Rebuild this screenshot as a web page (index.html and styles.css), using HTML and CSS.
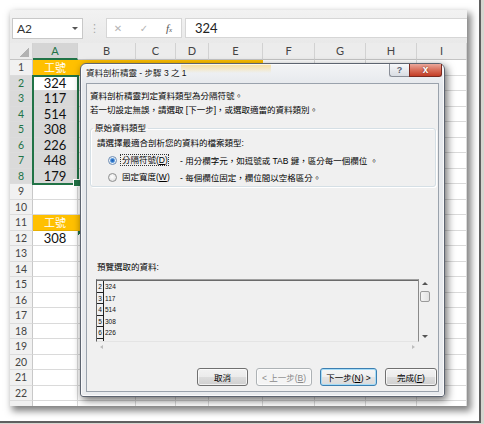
FILE: index.html
```html
<!DOCTYPE html>
<html>
<head>
<meta charset="utf-8">
<title>資料剖析精靈</title>
<link rel="stylesheet" href="styles.css">
</head>
<body>
<div class="photo">
  <div class="shot">
    <div class="fbar">
      <div class="namebox"><span>A2</span><span class="dd"></span></div>
      <div class="grip">⋮</div>
      <div class="fxbox"><span class="ic">✕</span><span class="ic ok">✓</span><span class="fx">f<small>x</small></span></div>
      <div class="finput">324</div>
    </div>
    <div class="sheet">
      <div class="grid">
        <i class="ch corner"></i><i class="ch cs">A</i><i class="ch">B</i><i class="ch">C</i><i class="ch">D</i><i class="ch">E</i><i class="ch">F</i><i class="ch">G</i><i class="ch">H</i><i class="ch">I</i>
        <b>1</b><i class="or t">工號</i><i class="or"></i><i class="or"></i><i class="or"></i><i class="or"></i><i></i><i></i><i></i><i></i>
        <b class="s">2</b><i class="a">324</i><i></i><i></i><i></i><i></i><i></i><i></i><i></i><i></i>
        <b class="s">3</b><i class="a s">117</i><i></i><i></i><i></i><i></i><i></i><i></i><i></i><i></i>
        <b class="s">4</b><i class="a s">514</i><i></i><i></i><i></i><i></i><i></i><i></i><i></i><i></i>
        <b class="s">5</b><i class="a s">308</i><i></i><i></i><i></i><i></i><i></i><i></i><i></i><i></i>
        <b class="s">6</b><i class="a s">226</i><i></i><i></i><i></i><i></i><i></i><i></i><i></i><i></i>
        <b class="s">7</b><i class="a s">448</i><i></i><i></i><i></i><i></i><i></i><i></i><i></i><i></i>
        <b class="s">8</b><i class="a s">179</i><i></i><i></i><i></i><i></i><i></i><i></i><i></i><i></i>
        <b>9</b><i></i><i></i><i></i><i></i><i></i><i></i><i></i><i></i><i></i>
        <b>10</b><i></i><i></i><i></i><i></i><i></i><i></i><i></i><i></i><i></i>
        <b>11</b><i class="or t">工號</i><i class="or"></i><i></i><i></i><i></i><i></i><i></i><i></i><i></i>
        <b>12</b><i class="a">308</i><i class="tri"></i><i></i><i></i><i></i><i></i><i></i><i></i><i></i>
        <b>13</b><i></i><i></i><i></i><i></i><i></i><i></i><i></i><i></i><i></i>
        <b>14</b><i></i><i></i><i></i><i></i><i></i><i></i><i></i><i></i><i></i>
        <b>15</b><i></i><i></i><i></i><i></i><i></i><i></i><i></i><i></i><i></i>
        <b>16</b><i></i><i></i><i></i><i></i><i></i><i></i><i></i><i></i><i></i>
        <b>17</b><i></i><i></i><i></i><i></i><i></i><i></i><i></i><i></i><i></i>
        <b>18</b><i></i><i></i><i></i><i></i><i></i><i></i><i></i><i></i><i></i>
        <b>19</b><i></i><i></i><i></i><i></i><i></i><i></i><i></i><i></i><i></i>
        <b>20</b><i></i><i></i><i></i><i></i><i></i><i></i><i></i><i></i><i></i>
        <b>21</b><i></i><i></i><i></i><i></i><i></i><i></i><i></i><i></i><i></i>
        <b>22</b><i></i><i></i><i></i><i></i><i></i><i></i><i></i><i></i><i></i>
        <b></b><i></i><i></i><i></i><i></i><i></i><i></i><i></i><i></i><i></i>
      </div>
      <div class="selbox"></div>

      <div class="dlg">
        <div class="tbar">
          <span class="ttl">資料剖析精靈 - 步驟 3 之 1</span>
          <div class="tbtns"><span class="help">?</span><span class="close">x</span></div>
        </div>
        <div class="body">
          <p>資料剖析精靈判定資料類型為分隔符號。</p>
          <p>若一切設定無誤，請選取 [下一步]，或選取適當的資料類別。</p>
          <fieldset>
            <legend>原始資料類型</legend>
            <p class="q">請選擇最適合剖析您的資料的檔案類型:</p>
            <div class="opt first"><span class="rb on"></span><span class="lbl f">分隔符號(<u>D</u>)</span><span class="desc">- 用分欄字元，如逗號或 TAB 鍵，區分每一個欄位 。</span></div>
            <div class="opt"><span class="rb"></span><span class="lbl">固定寬度(<u>W</u>)</span><span class="desc">- 每個欄位固定，欄位間以空格區分。</span></div>
          </fieldset>
          <p class="pvl">預覽選取的資料:</p>
          <div class="pv">
            <div class="pvd">
              <div class="pr"><span class="n">2</span><span class="v">324</span></div>
              <div class="pr"><span class="n">3</span><span class="v">117</span></div>
              <div class="pr"><span class="n">4</span><span class="v">514</span></div>
              <div class="pr"><span class="n">5</span><span class="v">308</span></div>
              <div class="pr"><span class="n">6</span><span class="v">226</span></div>
              <div class="pr"><span class="n"></span><span class="v"></span></div>
            </div>
            <div class="vs"><span class="up"></span><span class="thumb"></span><span class="dn"></span></div>
            <div class="hsb"><span class="lt"></span><span class="rt"></span></div>
            <div class="cor"></div>
          </div>
          <div class="btns">
            <button class="b1">取消</button>
            <button class="b2 dis">&lt; 上一步(<u>B</u>)</button>
            <button class="b3 def">下一步(<u>N</u>) &gt;</button>
            <button class="b4">完成(<u>F</u>)</button>
          </div>
        </div>
      </div>
    </div>
  </div>
</div>
</body>
</html>
```

FILE: styles.css
```css
* { box-sizing: border-box; }
html, body { margin: 0; }
body {
  width: 484px; height: 424px; overflow: hidden;
  background: #d6d6d0;
  font-family: "Liberation Sans", "Noto Sans CJK TC", sans-serif;
}
.photo {
  width: 481px; height: 423px;
  background: #fff;
  border-right: 2px solid #5f5f5f;
  border-bottom: 2px solid #5f5f5f;
  padding: 10px 0 0 10px;
}
.shot {
  width: 457px; height: 396px;
  background: #fff;
  overflow: hidden;
  box-shadow: 3px 4px 7px 1px rgba(0,0,0,.5);
}

/* formula bar */
.fbar {
  height: 33px;
  background: linear-gradient(#f2f2f2, #e9e9e9);
  display: flex; align-items: flex-start;
  padding: 8px 0 0 2px;
}
.namebox {
  width: 71px; height: 21px;
  background: #fff; border: 1px solid #c8c8c8;
  display: flex; align-items: center; justify-content: space-between;
  padding: 0 4px 0 4px;
  font-family: Lato, "Liberation Sans", sans-serif; font-size: 12px; color: #333;
}
.dd { width: 0; height: 0; border-left: 3px solid transparent; border-right: 3px solid transparent; border-top: 3px solid #555; }
.grip { width: 23px; height: 21px; text-align: center; line-height: 21px; font-family: "DejaVu Sans", sans-serif; font-size: 11px; color: #a8a8a8; }
.fxbox {
  width: 76px; height: 20px; background: #fff; border: 1px solid #d6d6d6;
  display: flex; align-items: center;
}
.ic { width: 22px; text-align: center; font-family: "DejaVu Sans", sans-serif; font-size: 10px; color: #b4b4b4; }
.ic.ok { width: 30px; }
.fx { width: 20px; text-align: center; font-family: "Liberation Serif", serif; font-style: italic; font-size: 11px; color: #555; }
.fx small { font-size: 7px; }
.finput {
  flex: 1; margin-left: 3px; height: 20px; background: #fff; border: 1px solid #d6d6d6; border-right: none;
  padding-left: 9px; line-height: 18px;
  font-family: Lato, "Liberation Sans", sans-serif; font-size: 13px; color: #222;
}

/* sheet */
.sheet { position: relative; }
.grid {
  display: grid;
  grid-template-columns: 23px 45px 58px 40px 33px 54px 52px 51px 51px 50px;
  grid-template-rows: 17px;
  grid-auto-rows: 15.5px;
}
.grid i {
  font-style: normal;
  border-right: 1px solid #dadada; border-bottom: 1px solid #dadada;
  background: #fff;
}
.grid i.ch {
  background: #ececec;
  border-right: 1px solid #d2d2d2; border-bottom: 1px solid #c4c4c4;
  text-align: center; line-height: 16px;
  font-family: Lato, "Liberation Sans", sans-serif; font-size: 11px; color: #444;
}
.grid i.cs { background: #d5d5d5; color: #217346; border-bottom: 2px solid #217346; }
.grid i.corner {
  background: linear-gradient(315deg, #b2b2b2 50%, transparent 50%) no-repeat right 3px bottom 2px / 9px 9px, #ececec;
}
.grid b {
  font-weight: normal;
  background: #f1f1f1;
  border-right: 1px solid #c8c8c8; border-bottom: 1px solid #dcdcdc;
  text-align: center; line-height: 15px;
  font-family: Lato, "Liberation Sans", sans-serif; font-size: 10.5px; color: #444;
}
.grid b.s { background: #dadada; color: #217346; }
.grid i.a {
  text-align: center; line-height: 15px;
  font-family: Lato, "Liberation Sans", sans-serif; font-size: 13px; color: #111;
}
.grid i.s { background: #d8d8d8; }
.grid i.or { background: #ffc000; border-right-color: #ffc000; border-bottom-color: #e8b000; }
.grid i.t {
  color: #fff; text-align: center; line-height: 15px;
  font-family: "Noto Sans CJK TC", sans-serif; font-size: 11px;
}
.grid i.tri { background: linear-gradient(135deg, #1e7145 3px, transparent 3px) no-repeat, #fff; }

.selbox {
  position: absolute; left: 22px; top: 31.5px; width: 47px; height: 110.5px;
  border: 2px solid #217346;
}
.selbox::after {
  content: ""; position: absolute; right: -4px; bottom: -4px;
  width: 6px; height: 6px; background: #217346; border: 1px solid #fff;
}

/* dialog */
.dlg {
  position: absolute; left: 70px; top: 20px;
  width: 365px; height: 334px;
  border: 1px solid #5d6470;
  border-radius: 6px 6px 3px 3px;
  background:
    linear-gradient(rgba(255,196,40,.45), rgba(255,196,40,0) 9px) no-repeat 100px 0 / 90px 12px,
    linear-gradient(#f3f4f6, #e5e8ec 22px, #e9ebee);
  padding: 0 5px 4px;
  box-shadow: 2px 3px 8px rgba(0,0,0,.6), inset 0 0 0 1px rgba(255,255,255,.75);
  font-size: 8.5px; color: #000;
}
.tbar { height: 19px; display: flex; justify-content: space-between; align-items: flex-start; }
.ttl { line-height: 19px; font-size: 8.5px; color: #111; text-shadow: 0 0 6px #fff, 0 0 3px #fff; }
.tbtns { display: flex; margin-right: -3px; }
.help {
  width: 20px; height: 13px;
  border: 1px solid #8a8f98; border-top: none; border-right: none; border-radius: 0 0 0 3px;
  background: linear-gradient(#f7f8fa, #d9dde3);
  text-align: center; line-height: 12px; font-size: 9px; font-weight: bold; color: #5a6170;
}
.close {
  width: 33px; height: 13px;
  border: 1px solid #7a2a20; border-top: none; border-radius: 0 0 3px 0;
  background: linear-gradient(#eba89b, #d86e5a 50%, #c33d25);
  text-align: center; line-height: 11px; font-size: 10px; font-weight: bold; color: #fff;
  text-shadow: 0 0 2px #6b1d12;
}
.body {
  height: 309px;
  border: 1px solid #9aa2ac;
  background: #f0f0f0;
  padding: 5px 0 0 3px;
}
.body p { margin: 0; line-height: 14px; }
fieldset {
  margin: 5px 2px 0 0; padding: 0 0 0 2px;
  border: 1px solid #d5dfe5; border-radius: 3px;
  box-shadow: inset 1px 1px 0 #fff, 1px 1px 0 #fff;
}
legend { padding: 0 2px; line-height: 12px; }
.body p.q { margin: 2px 0 0 4px; }
.opt { display: flex; align-items: center; height: 17px; margin-left: 15px; }
.opt.first { margin-top: 1.5px; }
.rb {
  width: 9px; height: 9px; border-radius: 50%;
  border: 1px solid #8e8f8f;
  background: radial-gradient(circle at 45% 40%, #ffffff, #e4e4e4 70%, #cfcfcf);
  margin-right: 3px;
}
.rb.on {
  border-color: #6d8db4;
  background: radial-gradient(circle, #1b5eb0 0, #3a7ed0 1.6px, #8fbde9 2.4px, #eef3f9 3px, #d8dde3 100%);
}
.lbl { width: 49px; height: 12px; line-height: 10px; padding-left: 1px; border: 1px dotted transparent; white-space: nowrap; }
.lbl.f { border-color: #333; }
.desc { margin-left: 11px; white-space: nowrap; }
.body p.pvl { margin: 73.5px 0 0 7px; }

.pv {
  margin: 5px 0 0 6px; width: 335px; height: 73px;
  display: grid; grid-template-columns: 323px 12px; grid-template-rows: 63px 10px;
}
.pvd {
  border-top: 1px solid #a0a0a0; border-left: 1px solid #606060;
  border-right: 1px solid #8a8a8a; border-bottom: 1px solid #e4e4e4;
  box-shadow: inset 0 1px 0 #6a6a6a;
  padding-top: 1px;
  overflow: hidden;
  font-family: "Liberation Sans", sans-serif; font-size: 6.5px; color: #111;
}
.pr { display: flex; height: 11.5px; line-height: 11.5px; }
.pr .n { width: 7px; border-right: 1px solid #222; border-bottom: 1px solid #222; text-align: center; }
.pr .v { margin-left: 1px; }
.vs { display: flex; flex-direction: column; align-items: center; padding: 3px 0 4px; }
.up { width: 0; height: 0; border-left: 3px solid transparent; border-right: 3px solid transparent; border-bottom: 3px solid #555; }
.dn { margin-top: auto; width: 0; height: 0; border-left: 3px solid transparent; border-right: 3px solid transparent; border-top: 3px solid #555; }
.thumb {
  margin-top: 6px; width: 10px; height: 11px; border: 1px solid #9a9a9a; border-radius: 2px;
  background: linear-gradient(to right, #f4f4f4, #e2e2e2);
}
.hsb { display: flex; justify-content: space-between; align-items: center; padding: 0 4px; }
.lt { width: 0; height: 0; border-top: 2.5px solid transparent; border-bottom: 2.5px solid transparent; border-right: 3px solid #bdbdbd; }
.rt { width: 0; height: 0; border-top: 2.5px solid transparent; border-bottom: 2.5px solid transparent; border-left: 3px solid #bdbdbd; }

.btns { display: flex; justify-content: flex-end; gap: 8px; margin: 16px 1px 0 0; }
.btns button {
  height: 18px; padding: 0;
  font-family: "Liberation Sans", "Noto Sans CJK TC", sans-serif; font-size: 8.5px; color: #000;
  border: 1px solid #707070; border-radius: 3px;
  background: linear-gradient(#f2f2f2, #ebebeb 50%, #dddddd 50%, #cfcfcf);
  box-shadow: inset 0 0 0 1px rgba(255,255,255,.7);
  white-space: nowrap;
}
.btns .b1 { width: 51px; }
.btns .b2 { width: 56px; }
.btns .b3 { width: 57px; }
.btns .b4 { width: 52px; }
.btns button.dis { border-color: #adb2b5; background: #f4f4f4; color: #8a8a8a; }
.btns button.def {
  border-color: #3c7fb1;
  background: linear-gradient(#f6f6f6, #efefef 50%, #e4e4e4 50%, #dadada);
  box-shadow: inset 0 0 0 1px #a6dcf7;
}
```
